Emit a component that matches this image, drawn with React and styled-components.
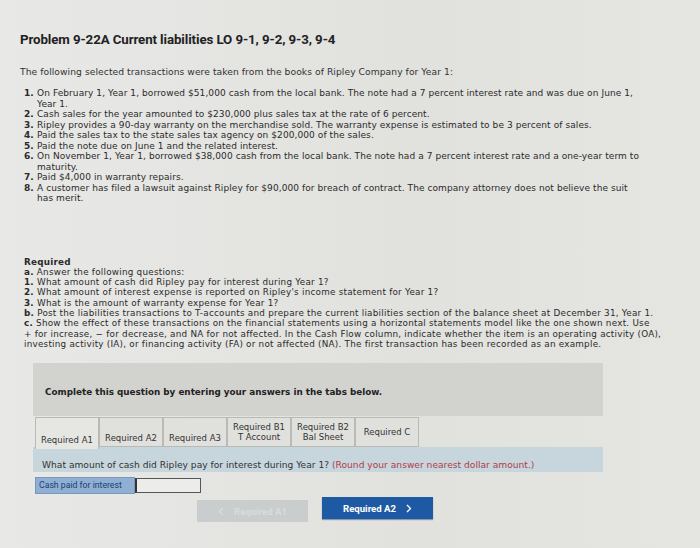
import styled, { createGlobalStyle } from 'styled-components';

const GlobalStyle = createGlobalStyle`
  body {
    margin: 0;
    background: #e4e4e1;
    font-family: "DejaVu Sans", Verdana, sans-serif;
    color: #2b2b2b;
  }
`;

const Page = styled.div`
  width: 700px;
  height: 548px;
  overflow: hidden;
  padding: 32px 0 0 20px;
  box-sizing: border-box;
  background: linear-gradient(90deg, #e8e8e6 0%, #e1e1de 60%, #e5e5e1 100%);
`;

const Title = styled.h1`
  margin: 0;
  font-family: Roboto, "Liberation Sans", sans-serif;
  font-size: 13.3px;
  font-weight: 700;
  color: #222;
  letter-spacing: -0.1px;
`;

const Intro = styled.p`
  margin: 19px 0 0;
  font-size: 9.2px;
  letter-spacing: 0.05px;
  color: #333;
`;

const List = styled.ol`
  list-style: none;
  margin: 11px 0 0;
  padding: 0 0 0 4px;
  font-size: 9px;
  line-height: 10.5px;
  letter-spacing: 0.08px;
`;

const Item = styled.li`
  white-space: nowrap;
  padding-left: 13px;
  text-indent: -13px;
`;

const Num = styled.b`
  font-weight: 700;
  display: inline-block;
  width: 13px;
  text-indent: 0;
`;

const Required = styled.div`
  margin: 53px 0 0 4px;
  font-size: 8.8px;
  line-height: 10.3px;
  letter-spacing: 0.24px;
  white-space: nowrap;
`;

const ReqHead = styled.div`
  font-weight: 700;
`;

const Panel = styled.div`
  margin: 14px 0 0 13px;
  width: 570px;
`;

const Notice = styled.div`
  background: #d2d2cf;
  height: 53px;
  padding: 24px 0 0 12px;
  box-sizing: border-box;
  font-weight: 700;
  font-size: 8.8px;
  color: #222;
`;

const Tabs = styled.div`
  display: flex;
  padding-left: 2px;
  margin-top: 1px;
`;

const Tab = styled.div`
  width: 64px;
  height: ${p => (p.$active ? '32px' : '30px')};
  margin-bottom: ${p => (p.$active ? '-2px' : '0')};
  box-sizing: border-box;
  border: 1px solid #b9b9b6;
  border-bottom: ${p => (p.$active ? 'none' : '1px solid #b9b9b6')};
  background: ${p => (p.$active ? '#e6e6e3' : '#e0e0dd')};
  display: flex;
  align-items: center;
  justify-content: center;
  text-align: center;
  padding-top: ${p => (p.$low ? '12px' : '0')};
  font-size: 8.5px;
  line-height: 10px;
  white-space: nowrap;
  color: #333;
  position: relative;
  z-index: ${p => (p.$active ? 1 : 0)};
`;

const QuestionBar = styled.div`
  background: #c7d6dd;
  height: 25px;
  padding: 13px 0 0 9px;
  box-sizing: border-box;
  font-size: 9.15px;
  color: #333;
  white-space: nowrap;
`;

const Hint = styled.span`
  color: #b23a48;
`;

const AnswerRow = styled.div`
  display: flex;
  margin: 5px 0 0 2px;
`;

const Label = styled.div`
  width: 100px;
  height: 17px;
  background: #8fb0d4;
  border: 1px solid #7a98ba;
  box-sizing: border-box;
  padding: 2px 0 0 3px;
  font-family: Roboto, "Liberation Sans", sans-serif;
  font-size: 8.7px;
  color: #1d3f73;
  white-space: nowrap;
`;

const Input = styled.div`
  width: 66px;
  height: 15px;
  background: #ececea;
  border: 1px solid #555;
  border-left: 2px solid #333;
  box-sizing: border-box;
  margin-top: 1px;
`;

const Buttons = styled.div`
  display: flex;
  align-items: flex-start;
  gap: 14px;
  margin: 3px 0 0 164px;
`;

const NavButton = styled.div`
  width: 111px;
  height: 22px;
  display: flex;
  align-items: center;
  justify-content: center;
  gap: 10px;
  font-family: Roboto, "Liberation Sans", sans-serif;
  font-size: 9.6px;
  font-weight: 700;
  margin-top: ${p => (p.$primary ? '0' : '3px')};
  background: ${p => (p.$primary ? '#1e5aa3' : '#c9cdce')};
  color: ${p => (p.$primary ? '#fff' : '#d8dcdd')};
  box-shadow: ${p => (p.$primary ? '0 1px 1px #8a99ad' : 'none')};
`;

const Chevron = ({ dir }) => (
  <svg width="6" height="9" viewBox="0 0 6 9">
    <path
      d={dir === 'left' ? 'M5 1 L1.5 4.5 L5 8' : 'M1 1 L4.5 4.5 L1 8'}
      fill="none"
      stroke="currentColor"
      strokeWidth="1.3"
    />
  </svg>
);

const items = [
  ['1.', 'On February 1, Year 1, borrowed $51,000 cash from the local bank. The note had a 7 percent interest rate and was due on June 1,', 'Year 1.'],
  ['2.', 'Cash sales for the year amounted to $230,000 plus sales tax at the rate of 6 percent.'],
  ['3.', 'Ripley provides a 90-day warranty on the merchandise sold. The warranty expense is estimated to be 3 percent of sales.'],
  ['4.', 'Paid the sales tax to the state sales tax agency on $200,000 of the sales.'],
  ['5.', 'Paid the note due on June 1 and the related interest.'],
  ['6.', 'On November 1, Year 1, borrowed $38,000 cash from the local bank. The note had a 7 percent interest rate and a one-year term to', 'maturity.'],
  ['7.', 'Paid $4,000 in warranty repairs.'],
  ['8.', 'A customer has filed a lawsuit against Ripley for $90,000 for breach of contract. The company attorney does not believe the suit', 'has merit.'],
];

const tabs = [
  { label: ['Required A1'], active: true, low: true },
  { label: ['Required A2'], low: true },
  { label: ['Required A3'], low: true },
  { label: ['Required B1', 'T Account'] },
  { label: ['Required B2', 'Bal Sheet'] },
  { label: ['Required C'] },
];

export default function App() {
  return (
    <>
      <GlobalStyle />
      <Page>
        <Title>Problem 9-22A Current liabilities LO 9-1, 9-2, 9-3, 9-4</Title>
        <Intro>The following selected transactions were taken from the books of Ripley Company for Year 1:</Intro>
        <List>
          {items.map(([n, text, cont]) => (
            <Item key={n}>
              <Num>{n}</Num>
              {text}
              {cont && (
                <>
                  <br />
                  {cont}
                </>
              )}
            </Item>
          ))}
        </List>
        <Required>
          <ReqHead>Required</ReqHead>
          <div><b>a.</b> Answer the following questions:</div>
          <div><b>1.</b> What amount of cash did Ripley pay for interest during Year 1?</div>
          <div><b>2.</b> What amount of interest expense is reported on Ripley's income statement for Year 1?</div>
          <div><b>3.</b> What is the amount of warranty expense for Year 1?</div>
          <div><b>b.</b> Post the liabilities transactions to T-accounts and prepare the current liabilities section of the balance sheet at December 31, Year 1.</div>
          <div><b>c.</b> Show the effect of these transactions on the financial statements using a horizontal statements model like the one shown next. Use</div>
          <div>+ for increase, − for decrease, and NA for not affected. In the Cash Flow column, indicate whether the item is an operating activity (OA),</div>
          <div>investing activity (IA), or financing activity (FA) or not affected (NA). The first transaction has been recorded as an example.</div>
        </Required>
        <Panel>
          <Notice>Complete this question by entering your answers in the tabs below.</Notice>
          <Tabs>
            {tabs.map((t, i) => (
              <Tab key={i} $active={t.active} $low={t.low}>
                <div>
                  {t.label.map((l, j) => (
                    <div key={j}>{l}</div>
                  ))}
                </div>
              </Tab>
            ))}
          </Tabs>
          <QuestionBar>
            What amount of cash did Ripley pay for interest during Year 1? <Hint>(Round your answer nearest dollar amount.)</Hint>
          </QuestionBar>
          <AnswerRow>
            <Label>Cash paid for interest</Label>
            <Input />
          </AnswerRow>
          <Buttons>
            <NavButton>
              <Chevron dir="left" />
              Required A1
            </NavButton>
            <NavButton $primary>
              Required A2
              <Chevron dir="right" />
            </NavButton>
          </Buttons>
        </Panel>
      </Page>
    </>
  );
}
